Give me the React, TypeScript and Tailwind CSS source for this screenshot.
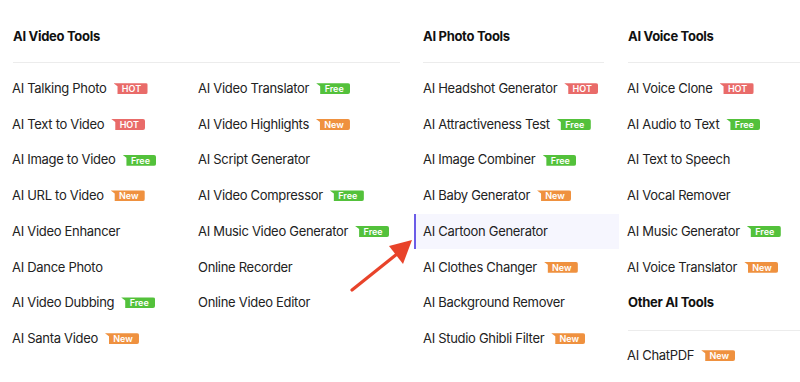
import type { ReactNode } from 'react';

type Tag = 'HOT' | 'Free' | 'New';
type Item = { label: string; tag?: Tag; active?: boolean };

const videoA: Item[] = [
  { label: 'AI Talking Photo', tag: 'HOT' },
  { label: 'AI Text to Video', tag: 'HOT' },
  { label: 'AI Image to Video', tag: 'Free' },
  { label: 'AI URL to Video', tag: 'New' },
  { label: 'AI Video Enhancer' },
  { label: 'AI Dance Photo' },
  { label: 'AI Video Dubbing', tag: 'Free' },
  { label: 'AI Santa Video', tag: 'New' },
];

const videoB: Item[] = [
  { label: 'AI Video Translator', tag: 'Free' },
  { label: 'AI Video Highlights', tag: 'New' },
  { label: 'AI Script Generator' },
  { label: 'AI Video Compressor', tag: 'Free' },
  { label: 'AI Music Video Generator', tag: 'Free' },
  { label: 'Online Recorder' },
  { label: 'Online Video Editor' },
];

const photo: Item[] = [
  { label: 'AI Headshot Generator', tag: 'HOT' },
  { label: 'AI Attractiveness Test', tag: 'Free' },
  { label: 'AI Image Combiner', tag: 'Free' },
  { label: 'AI Baby Generator', tag: 'New' },
  { label: 'AI Cartoon Generator', active: true },
  { label: 'AI Clothes Changer', tag: 'New' },
  { label: 'AI Background Remover' },
  { label: 'AI Studio Ghibli Filter', tag: 'New' },
];

const voice: Item[] = [
  { label: 'AI Voice Clone', tag: 'HOT' },
  { label: 'AI Audio to Text', tag: 'Free' },
  { label: 'AI Text to Speech' },
  { label: 'AI Vocal Remover' },
  { label: 'AI Music Generator', tag: 'Free' },
  { label: 'AI Voice Translator', tag: 'New' },
];

const tagColor: Record<Tag, string> = {
  HOT: 'bg-[#e96b69]',
  Free: 'bg-[#53c13b]',
  New: 'bg-[#ef913f]',
};

function Badge({ tag }: { tag: Tag }) {
  return (
    <span
      className={`ml-[7px] inline-flex h-[11px] w-[34px] items-center justify-center rounded-r-[2px] pl-[2px] text-[9px] font-semibold leading-none tracking-normal text-white [clip-path:polygon(0_0,100%_0,100%_100%,4px_100%,4px_3px)] ${tagColor[tag]}`}
    >
      {tag}
    </span>
  );
}

function Row({ item, pl = 'pl-0' }: { item: Item; pl?: string }) {
  return (
    <div
      className={`flex h-[35.7px] items-center ${pl} ${
        item.active ? 'border-l-2 border-[#6b5ce7] bg-[#f6f6fe]' : ''
      }`}
    >
      <span className="whitespace-nowrap">{item.label}</span>
      {item.tag && <Badge tag={item.tag} />}
    </div>
  );
}

function Heading({ children, className = '' }: { children: ReactNode; className?: string }) {
  return (
    <div className={`pt-[26px] ${className}`}>
      <div className="h-5 text-[13px] font-bold leading-5 tracking-[-0.3px] text-[#111]">{children}</div>
      <div className="mt-[16px] h-px bg-[#ececec]" />
    </div>
  );
}

export default function App() {
  return (
    <div
      className="relative flex h-[382px] w-[800px] overflow-hidden bg-white text-[13px] tracking-[-0.3px] text-[#222]"
      style={{ fontFamily: 'Inter, "Open Sans", sans-serif' }}
    >
      {/* AI Video Tools */}
      <div className="w-[400px] shrink-0 pl-[12px]">
        <Heading className="pl-[1px]">AI Video Tools</Heading>
        <div className="mt-[8px] flex">
          <div className="w-[186px]">
            {videoA.map((it) => (
              <Row key={it.label} item={it} />
            ))}
          </div>
          <div>
            {videoB.map((it) => (
              <Row key={it.label} item={it} />
            ))}
          </div>
        </div>
      </div>

      {/* AI Photo Tools */}
      <div className="ml-[14px] w-[205px] shrink-0">
        <Heading className="pl-[9px] pr-[15px]">AI Photo Tools</Heading>
        <div className="mt-[8px]">
          {photo.map((it) => (
            <Row key={it.label} item={it} pl={it.active ? 'pl-[7px]' : 'pl-[9px]'} />
          ))}
        </div>
      </div>

      {/* AI Voice Tools */}
      <div className="flex-1 pl-[8px]">
        <Heading className="pl-px">AI Voice Tools</Heading>
        <div className="mt-[8px]">
          {voice.map((it) => (
            <Row key={it.label} item={it} />
          ))}
          <div className="flex h-[35.7px] items-center pl-px text-[13px] font-bold text-[#111]">
            Other AI Tools
          </div>
          <div className="ml-px mt-[9px] h-px bg-[#ececec]" />
          <div className="mt-[7px]">
            <Row item={{ label: 'AI ChatPDF', tag: 'New' }} />
          </div>
        </div>
      </div>

      {/* pointer arrow */}
      <svg className="absolute left-[345px] top-[232px]" width="72" height="64" viewBox="0 0 72 64">
        <line x1="7" y1="58" x2="52" y2="22" stroke="#e8432a" strokeWidth="3.2" strokeLinecap="round" />
        <polygon points="67,8 44,14 58,32" fill="#e8432a" />
      </svg>
    </div>
  );
}
